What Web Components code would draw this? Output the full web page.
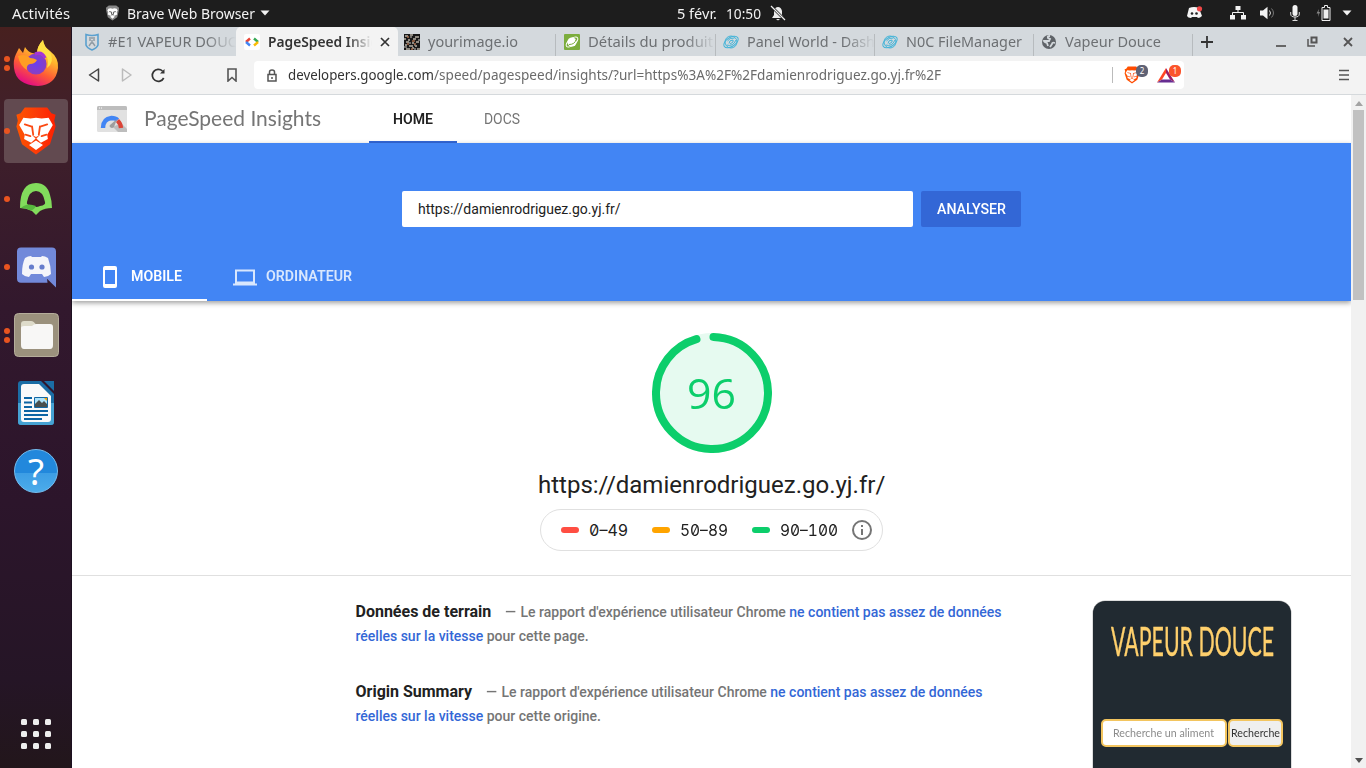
<!DOCTYPE html>
<html lang="fr">
<head>
<meta charset="utf-8">
<title>PageSpeed Insights</title>
<style>html,body{margin:0;height:100%;overflow:hidden;background:#fff;font-family:Roboto,sans-serif}</style>
</head>
<body>
<desktop-shell></desktop-shell>
<script>
const define = (name, css, html) => customElements.define(name, class extends HTMLElement {
  constructor() {
    super();
    this.attachShadow({ mode: 'open' }).innerHTML = `<style>:host{display:block;box-sizing:border-box}*{box-sizing:border-box}svg{display:block;flex:none}${css}</style>${html}`;
  }
});
const planet = c => `<svg slot="icon" width="16" height="16" viewBox="0 0 16 16" fill="none" stroke="${c}" stroke-width="1"><ellipse cx="8" cy="8" rx="8" ry="4.500" transform="rotate(-33 8 8)"/><circle cx="8" cy="8" r="6"/><path d="M3.500 11Q10 13 13 6M4.500 7q2-3.500 7-3M6 9.500q0-3.500 4-3.500v2L7 10"/></svg>`;
const brave = `<path d="M8 1h16l3 4 3 1-1 4 1 4-4 12-10 7L6 26 2 14l1-4-1-4 3-1z" fill="url(#bg)"/><path d="M7 8l5 .5 4-.5 4 .5 5-.5 3 5-4 6.500.5 3-5 2.500-3.500-3-3.500 3-5-2.500.5-3L4 13zM11 26.500l5-3 5 3-5 3.500z" fill="#fff"/><path d="M8 12.500l5 1.500M24 12.500L19 14M13.200 14l.8 5.500M18.800 14l-.8 5.500M8.500 19.500l3.500 1M23.500 19.500l-3.500 1" fill="none" stroke="#fb4a13" stroke-width="1.300" stroke-linecap="round"/><path d="M13 19.500l3 1.500 3-1.500-3 3z" fill="#fb4a13"/>`;

define('desktop-shell', `
:host{display:grid;grid-template:27px 1fr/72px 1fr;width:1366px;height:768px;overflow:hidden}
top-bar{grid-column:1/3}
`, `<top-bar></top-bar><app-dock></app-dock><browser-window></browser-window>`);

define('top-bar', `
:host{background:#1d1d1d;color:#f2f2f2;font:15px/27px "Noto Sans",sans-serif;display:grid;grid-template-columns:677px 1fr auto}
div{display:flex;align-items:center;height:26px}
.l{padding-left:12px}.l svg.b{margin:0 7px 0 35px}.l svg.a{margin-left:5px}
.c ui-text+ui-text{margin-left:9px}.c svg{margin-left:9px}
.r{padding-right:14px}
`, `<div class="l"><ui-text w="58">Activités</ui-text><svg class="b" width="15" height="16" viewBox="0 0 32 34"><path d="M8 1h16l6 5-1 8-3 12-10 7L6 26 3 14 2 6z" fill="#888"/><path d="M7 8l5-1 4 1 4-1 5 1 2 4-2 3 1 5-6 3-4-2-4 2-6-3 1-5-2-3zM11 25l5-3 5 3-5 4z" fill="#fff"/><path d="M9 14l5 1v5h4v-5l5-1" fill="none" stroke="#555" stroke-width="2"/></svg><ui-text w="128">Brave Web Browser</ui-text><svg class="a" width="10" height="6"><path d="M.5.500h9L5 5.500z" fill="#f2f2f2"/></svg></div>
<div class="c"><ui-text w="40">5 févr.</ui-text><ui-text w="35">10:50</ui-text><svg width="16" height="16" viewBox="0 0 16 16"><path d="M2 13h12l-2-3V6Q11 2 8 2T4 6v4zM6 14h4l-2 1.500z" fill="#eee"/><path d="M1 1l14 14" stroke="#1d1d1d" stroke-width="2.500"/><path d="M1 1l14 14" stroke="#eee" stroke-width="1.200"/></svg></div>
<div class="r"><svg width="17" height="14" viewBox="0 0 17 14" style="margin-right:27px"><path d="M3 2Q8 0 13 2l3 8q-2 2-4 2l-1-1H6l-1 1Q2 12 1 10z" fill="#f4f4f4"/><circle cx="6" cy="7.500" r="1.300" fill="#222"/><circle cx="10.500" cy="7.500" r="1.300" fill="#222"/><circle cx="13.500" cy="2.800" r="2.600" fill="#f04747"/></svg>
<svg width="16" height="14" viewBox="0 0 16 14" style="margin-right:14px"><path d="M5.500 0h5v4h-5zM0 9h5v4.500H0zM11 9h5v4.500h-5z" fill="#f2f2f2"/><path d="M8 4v3M2.500 9V6.500h11V9" fill="none" stroke="#f2f2f2"/></svg>
<svg width="15" height="14" viewBox="0 0 15 14" style="margin-right:15px"><path d="M0 4.500h3L7.500.8v12.400L3 9.500H0z" fill="#f2f2f2"/><path d="M9.500 4.500q2 2.500 0 5" stroke="#ddd" fill="none"/><path d="M11.500 2.500q4 4.500 0 9" stroke="#777" fill="none"/></svg>
<svg width="10" height="16" viewBox="0 0 10 16" style="margin-right:16px"><rect x="2.500" width="5" height="11" rx="2.500" fill="#f2f2f2"/><path d="M.7 7v2q0 3 4.300 3t4.300-3V7M5 12v3.500M2.500 15.500h5" fill="none" stroke="#ddd"/></svg>
<svg width="15" height="16" viewBox="0 0 15 16" style="margin-right:11px"><path d="M3 4L.5 8.500h2L2 12l2-5H2.500z" fill="#888"/><path d="M6 2.500h2.500v-2h3v2H14v13H6z" stroke="#eee" fill="none"/><path d="M7.500 4.500h5v9h-5z" fill="#eee"/></svg>
<svg width="10" height="6"><path d="M.5.500h9L5 5.500z" fill="#f2f2f2"/></svg></div>`);

define('dock-item', `
:host{position:relative;height:68px;display:grid;place-items:center}
:host([active]) .tile{background:#624a50}
.tile{width:64px;height:64px;border-radius:4px;display:grid;place-items:center}
.dots{position:absolute;left:4px;top:0;height:100%;display:flex;flex-direction:column;justify-content:center;gap:3px}
.dots i{width:6px;height:6px;border-radius:50%;background:#e95420;display:none}
:host([dots]) i:first-child,:host([dots="2"]) i{display:block}
`, `<div class="tile"><slot></slot></div><div class="dots"><i></i><i></i></div>`);

define('app-dock', `
:host{background:linear-gradient(#47201f 0,#41202a 12%,#32182d 38%,#2c152b 64%,#251526 88%,#22161b 100%);display:flex;flex-direction:column;padding-top:2px;border-right:1px solid #1c1020}
dock-item{margin-right:-1px}
.grid{margin:auto 0 19px 21px;display:grid;grid-template-columns:repeat(3,6px);gap:6px;width:30px}
.grid i{width:6px;height:6px;background:#eee;border-radius:1.500px}
.help{width:44px;height:44px;border-radius:50%;background:linear-gradient(#2288dc 0 54%,#3c9de5 54%,#4cacea);border:1px solid #74bdf0;color:#fff;font:37px/42px "Noto Sans",sans-serif;text-align:center}
`, `
<dock-item dots="2"><svg width="46" height="46" viewBox="0 0 46 46"><defs><linearGradient id="f" x1=".8" y1="0" x2=".3" y2="1"><stop stop-color="#fff44f"/><stop offset=".35" stop-color="#ffb52c"/><stop offset=".65" stop-color="#ff5b35"/><stop offset="1" stop-color="#e1058a"/></linearGradient><radialGradient id="p"><stop stop-color="#6a3ff0"/><stop offset="1" stop-color="#8a3fc0"/></radialGradient></defs><path d="M3 14l3-6 4 5 2-6q3 5 7 6l5 1q0-8 6-14 0 6 7 11 9 7 8 17-2 17-20 18Q3 45 1 28 0 20 3 14z" fill="url(#f)"/><circle cx="23" cy="24" r="10.500" fill="url(#p)"/><path d="M5 16q8-3 12 2 4 0 7 2-2 4-7 4-4 1-3 6-7-4-9-14z" fill="#ff9d24"/><path d="M24 14Q38 12 34 28q8-6 3-16-6-5-7-12-6 6-6 14z" fill="#ffe044"/><path d="M22 14q7-3 10 4" stroke="#a535d8" stroke-width="3" fill="none"/></svg></dock-item>
<dock-item dots="1" active><svg width="42" height="50" viewBox="1 0 30 34" preserveAspectRatio="none"><defs><linearGradient id="bg"><stop stop-color="#ff5500"/><stop offset=".55" stop-color="#fb3a08"/><stop offset="1" stop-color="#ff2000"/></linearGradient></defs>${brave}</svg></dock-item>
<dock-item dots="1"><svg width="34" height="34" viewBox="0 0 34 34"><path fill-rule="evenodd" d="M17 1Q28 1 31 13q2 6 2 13-7 0-12 3l-4 4-4-4Q7 26 1 26 1 1 17 1zM17 9q-7 0-9 11-1 3 5 4 4 2 8 0 6-1 5-4Q24 9 17 9z" fill="#82dc5c"/><path d="M2 26q6-6 15-2-2 5-7 4-2-2-8-2z" fill="#58b83e"/></svg></dock-item>
<dock-item dots="1"><svg width="39" height="41" viewBox="0 0 39 41"><path d="M4 .5h31q4 0 4 4V41l-9-9 .5 4H4q-4 0-4-4V4.500q0-4 4-4z" fill="#7289da" transform="scale(1 .99)"/><path d="M8 11q3-2 6-2l1 1h9l1-1q3 0 6 2 3 8 3 16-3 3-7 3l-2-3H14l-2 3q-4 0-7-3 0-10 3-16z" fill="#f5f5fa"/><circle cx="14.500" cy="20" r="2.600" fill="#667ccc"/><circle cx="25" cy="20" r="2.600" fill="#667ccc"/></svg></dock-item>
<dock-item dots="2"><svg width="45" height="44" viewBox="0 0 45 44"><rect x=".5" y=".5" width="44" height="43" rx="4" fill="#9b917d" stroke="#b5ad9b"/><path d="M7 11q0-3 3-3h7q3 0 5 4v8H7z" fill="#dedbca"/><path d="M7 15q0-2 3-2h8q2-2 4-2h14q3 0 3 3v18q0 4-3 4H10q-3 0-3-4z" fill="#f8f7f6"/></svg></dock-item>
<dock-item><svg width="38" height="46" viewBox="0 0 38 46"><path d="M4 1h20l13 13v28q0 3-3 3H4q-3 0-3-3V4q0-3 3-3z" fill="#1b6da5"/><path d="M1 23h36v19q0 3-3 3H4q-3 0-3-3z" fill="#46a2d3"/><path d="M7 4h15l12 12v23q0 3-3 3H7q-3 0-3-3V7q0-3 3-3z" fill="#fafafa"/><path d="M27 1h10v10z" fill="#1b6da5"/><path d="M7 18h8M7 22.500h8M7 27h8M7 31h24M7 35h24M7 39h18" stroke="#0d65a4" stroke-width="2"/><path d="M17.500 17.500h13v10h-13z" fill="#aee3fa" stroke="#1468a4"/><path d="M18 27v-3l4-4 3 3 2-2 3 3v3z" fill="#49504f"/><path d="M27 18h3v3z" fill="#fba400"/></svg></dock-item>
<dock-item><div class="help">?</div></dock-item>
<div class="grid">${'<i></i>'.repeat(9)}</div>`);

define('browser-window', `
:host{display:grid;grid-template-rows:29px 39px 1fr;min-height:0;overflow:hidden}
main{display:grid;grid-template-columns:1279px 15px;min-height:0}
`, `<tab-strip></tab-strip><tool-bar></tool-bar><main><page-view></page-view><scroll-rail></scroll-rail></main>`);

define('browser-tab', `
:host{display:flex;align-items:center;gap:8px;width:159px;height:29px;padding-left:7px;color:#6d7073;font:15px/29px "Noto Sans",sans-serif;overflow:hidden;background:linear-gradient(#b7bbbe,#b7bbbe) right 0 top 7px/1px 22px no-repeat}
.t{flex:1;overflow:hidden}
:host([fade]) .t{-webkit-mask:linear-gradient(90deg,#000 76%,transparent 100%)}
:host([active]){width:162px;padding-left:8px;background:#f3f3f3;border-radius:5px 5px 0 0;color:#333;font-weight:600;padding-right:8px}
:host([plain]){background:none;padding-left:8px}
`, `<slot name="icon"></slot><div class="t"><slot></slot></div><slot name="close"></slot>`);

define('tab-strip', `
:host{display:flex;align-items:center;background:#d4d9dd;padding-left:4px}
.wc{margin-left:auto;display:flex;align-items:center;gap:20px;padding-right:12px}
`, `
<browser-tab fade plain style="width:160px"><svg slot="icon" width="16" height="18" viewBox="0 0 16 18" fill="none" stroke="#5aa0cf"><path d="M2 1.500Q8 3.500 14 1.500V12q-1 3-6 5-5-2-6-5z" stroke-width="1.600"/><path d="M5 5h6M5 7h2M9 7h2M8 7v3M5 13l2-3h2l2 3" stroke="#8e9aa3" stroke-width="1.400"/></svg><ui-text w="129">#E1 VAPEUR DOUC</ui-text></browser-tab>
<browser-tab active fade><svg slot="icon" width="16" height="16" viewBox="0 0 16 16"><rect width="16" height="16" rx="2" fill="#fff"/><g fill="none" stroke-width="2.400"><path d="M6 4.500L2 8" stroke="#ea4335"/><path d="M2 8l4 3.500" stroke="#4285f4"/><path d="M10 4.500L14 8" stroke="#34a853"/><path d="M14 8l-4 3.500" stroke="#fbbc04"/></g></svg><ui-text w="111">PageSpeed Insig</ui-text><svg slot="close" width="10" height="10" stroke="#333" stroke-width="1.700"><path d="M1 1l8 8M9 1L1 9"/></svg></browser-tab>
<browser-tab style="padding-left:6px;width:158px"><svg slot="icon" width="16" height="16" viewBox="0 0 16 16"><path fill="#181818" d="M0 0h16v16H0z"/><path d="M1 2h3M6 1h3M11 3h4M0 5h2M4 6h2M9 5h3M2 8h3M8 9h2M12 8h3M1 11h2M5 12h4M11 12h2M2 15h4M8 14h2M13 15h3" stroke="#b7b0a4" stroke-width="1.500"/><path d="M6 3h2M14 6h2M5 9h2M10 11h1M0 13h3M10 15h2" stroke="#8f8c88" stroke-width="1.500"/><path d="M3 3h2M8 7h3M3 10h2M10 10h2M7 15h2" stroke="#a56b4b" stroke-width="1.500"/></svg><ui-text w="90">yourimage.io</ui-text></browser-tab>
<browser-tab fade style="padding-left:8px;width:160px"><svg slot="icon" width="16" height="16" viewBox="0 0 16 16"><rect width="16" height="16" rx="1" fill="#7cad3d"/><circle cx="8" cy="8" r="4.600" fill="#fff"/><ellipse cx="8" cy="8" rx="7" ry="3.300" transform="rotate(-38 8 8)" fill="none" stroke="#fff"/><path d="M5 10.500q6 0 7-5" stroke="#7cad3d" fill="none"/></svg><ui-text w="125">Détails du produit</ui-text></browser-tab>
<browser-tab fade>${planet('#45b4d8')}<ui-text w="128">Panel World - Dash</ui-text></browser-tab>
<browser-tab>${planet('#45b4d8')}<ui-text w="116">N0C FileManager</ui-text></browser-tab>
<browser-tab><svg slot="icon" width="16" height="16" viewBox="0 0 16 16"><circle cx="8" cy="8" r="7" fill="#5f6368"/><path d="M9 2q-3 0-2 2l2 1-1 2H3q0 1 3 2l1 3M14 9q-3-1-3 1l-2 3" stroke="#d4d9dd" stroke-width="1.800" fill="none"/></svg><ui-text w="96">Vapeur Douce</ui-text></browser-tab>
<svg width="12" height="12" style="margin-left:8px" stroke="#333" stroke-width="1.800"><path d="M6 0v12M0 6h12"/></svg>
<div class="wc"><svg width="11" height="12"><path d="M0 10h10" stroke="#666" stroke-width="2"/></svg><svg width="12" height="12" fill="none" stroke="#555"><path d="M4.500 1.500h5v5h-5z" stroke-width="2"/><path d="M1 3v7h7" stroke-width="1.500"/></svg><svg width="10" height="10" style="margin:0 1px 0 4px" stroke="#555" stroke-width="1.800"><path d="M1 1l8 8M9 1L1 9"/></svg></div>`);

define('tool-bar', `
:host{display:flex;align-items:center;background:#f3f3f3;border-bottom:1px solid #d5d9dc;padding:0 17px 0 16px}
.addr{width:930px;height:28px;background:#fff;border-radius:4px;margin-left:15px;display:flex;align-items:center;padding:0 2px 0 12px;font:15px/26px "Noto Sans",sans-serif;color:#6b6b6b}
.addr ui-text{margin-bottom:2px}
.addr .host{color:#333;margin-left:10px}
.sep{width:1px;height:16px;background:#bbb;margin-left:auto;margin-right:11px}
.ic{position:relative;width:33px;height:18px}
.ic b{position:absolute;left:12px;top:-1px;width:12px;height:12px;border-radius:5px;background:#5f6275;color:#fff;font:8px/12px "Noto Sans",sans-serif;text-align:center}
.ic.n{width:25px}.ic.n b{background:#fb542b}
`, `
<svg width="12" height="14" fill="none" stroke="#444" stroke-width="1.500"><path d="M10.500 1v12L1.500 7z" stroke-linejoin="round"/></svg>
<svg width="12" height="14" fill="none" stroke="#bbb" stroke-width="1.500" style="margin-left:21px"><path d="M1.500 1v12l8.500-6z" stroke-linejoin="round"/></svg>
<svg width="15" height="15" fill="none" stroke="#333" stroke-width="1.700" style="margin-left:18px"><path d="M12.700 10A6 6 0 1 1 11.500 3"/><path d="M13.500 1v4.500H9z" fill="#333" stroke="none"/></svg>
<svg width="10" height="14" fill="none" stroke="#555" stroke-width="1.600" style="margin-left:61px;margin-right:2px"><path d="M1 1h8v12L5 9.500 1 13z"/></svg>
<div class="addr"><svg width="12" height="13" fill="none" stroke="#555" stroke-width="1.500"><path d="M2 5.500h8v6.500H2zM3.500 5V3q0-2 2.500-2t2.500 2v2M6 8v2"/></svg><ui-text class="host" w="146">developers.google.com</ui-text><ui-text w="507">/speed/pagespeed/insights/?url=https%3A%2F%2Fdamienrodriguez.go.yj.fr%2F</ui-text>
<span class="sep"></span><span class="ic"><svg width="16" height="18" viewBox="1 0 30 34"><defs><linearGradient id="bg"><stop stop-color="#f50"/><stop offset="1" stop-color="#ff4200"/></linearGradient></defs>${brave}</svg><b>2</b></span><span class="ic n"><svg width="18" height="18" viewBox="0 0 18 18"><path d="M9 2L0 16.500l5-3L9 7z" fill="#ff4724"/><path d="M9 2l9 14.500-5-3L9 7z" fill="#9e1f63"/><path d="M0 16.500h18l-5-3H5z" fill="#662d91"/></svg><b>1</b></span></div>
<svg width="10" height="12" stroke="#555" stroke-width="1.700" style="margin-left:auto"><path d="M0 1.500h10M0 6h10M0 10.500h10"/></svg>`);

define('scroll-rail', `
:host{background:#f1f1f1;display:flex;flex-direction:column;align-items:center;padding:6px 0 5px}
i{width:11px;height:190px;background:#c1c1c1;margin:4px 0 auto}
`, `<svg width="8" height="5"><path d="M0 5h8L4 0z" fill="#a3a3a3"/></svg><i></i><svg width="8" height="5"><path d="M0 0h8L4 5z" fill="#505050"/></svg>`);

define('page-view', `:host{background:#fff;min-width:0;min-height:0;overflow:hidden}`,
 `<site-header></site-header><search-hero></search-hero><score-panel></score-panel><field-data></field-data>`);

define('site-header', `
:host{display:flex;align-items:center;height:48px;padding-left:25px;font:500 14px/48px Roboto,sans-serif;color:#757575}
.name{font:400 20.500px/44px Lato,sans-serif;margin:0 48px 2px 17px}
.tab{height:48px;padding:0 24px;width:88px}
.tab.on{color:#212121;font-weight:600;border-bottom:2px solid #3367d6}
.tab.docs{padding-left:27px;font-weight:400}
`, `<svg width="30" height="26" viewBox="0 0 30 26"><rect width="30" height="26" rx="1.500" fill="#e1e1e1"/><path d="M0 4V1.500Q0 0 1.500 0h27Q30 0 30 1.500V4z" fill="#bdbdbd"/><path d="M2 2h1M4 2h1" stroke="#fff"/><path d="M16 21l8-4 6 6v3h-9z" fill="#bdbdbd"/><path d="M6 22q0-9 8.500-10 4 0 6 2" fill="none" stroke="#4285f4" stroke-width="4.400"/><path d="M20.500 14.500q3.200 3 3.500 7.500" fill="none" stroke="#db4437" stroke-width="4.400"/><path d="M13 19l7-6-3 8q-2 2-4 0-1-1 0-2z" fill="#9e9e9e"/></svg>
<ui-text class="name" w="177">PageSpeed Insights</ui-text><div class="tab on"><ui-text w="40">HOME</ui-text></div><div class="tab docs"><ui-text w="36">DOCS</ui-text></div>`);

define('search-hero', `
:host{height:158px;background:#4285f4;box-shadow:0 2px 5px rgba(0,0,0,.38);position:relative;display:flex;flex-direction:column;justify-content:space-between;padding-top:48px;font:500 14px/36px Roboto,sans-serif;color:#fff}
form{display:flex;gap:8px;padding-left:330px}
.in{width:511px;height:36px;background:#fff;border-radius:2px;color:#212121;font-weight:400;padding-left:16px}
.btn{width:100px;height:36px;background:#3367d6;border-radius:2px;padding-left:16px}
nav{display:flex;height:50px;font-weight:600}
nav div{display:flex;align-items:center;height:50px}
.m{width:135px;border-bottom:2px solid #fff;padding-left:31px}
.m ui-text{margin-left:14px}.d{padding:0 0 2px 26px;color:#d9e7fd}.d ui-text{margin-left:9px}
nav ui-text{line-height:48px;margin-top:2px}
`, `<form><div class="in"><ui-text w="202">https://damienrodriguez.go.yj.fr/</ui-text></div><div class="btn"><ui-text w="69">ANALYSER</ui-text></div></form>
<nav><div class="m"><svg width="14" height="22" style="margin-top:3px"><path fill-rule="evenodd" d="M2 0h10q2 0 2 2v18q0 2-2 2H2q-2 0-2-2V2Q0 0 2 0zM2 4v14h10V4z" fill="#fff"/></svg><ui-text w="51">MOBILE</ui-text></div>
<div class="d"><svg width="24" height="17" style="margin-top:4px"><path d="M3 1.500h18v12H3zM0 15.500h24" fill="none" stroke="#d9e7fd" stroke-width="2"/></svg><ui-text w="86">ORDINATEUR</ui-text></div></nav>`);

define('score-gauge', `
:host{width:120px;height:120px;display:grid}
svg,div{grid-area:1/1}
div{font:400 41.500px/121px "Open Sans",sans-serif;color:#0cce6b;text-align:center;padding-right:2px}
`, `<svg width="120" height="120"><circle cx="60" cy="60" r="60" fill="#e6faf0"/><circle cx="60" cy="60" r="56" fill="none" stroke="#0cce6b" stroke-width="8" stroke-linecap="round" stroke-dasharray="334 352" transform="rotate(-88.500 60 60)"/></svg><div><ui-text w="49">96</ui-text></div>`);

define('score-panel', `
:host{height:275px;border-bottom:1px solid #e0e0e0;display:flex;flex-direction:column;align-items:center;padding-top:32px;color:#212121}
h1{font:400 24px/32px Roboto,sans-serif;margin:16px 0 8px}
.legend{display:flex;align-items:center;width:343px;height:42px;border:1px solid #e0e0e0;border-radius:21px;padding-left:20px;font:400 16px/40px Inter,sans-serif;font-feature-settings:"zero","tnum"}
i{width:18px;height:6px;border-radius:3px;margin-right:10px}
.legend ui-text{margin-right:24px}.legend ui-text.z{margin-right:14px}
`, `<score-gauge></score-gauge><h1><ui-text w="347">https://damienrodriguez.go.yj.fr/</ui-text></h1>
<div class="legend"><i style="background:#ff4e42"></i><ui-text w="39">0–49</ui-text><i style="background:#ffa400"></i><ui-text w="48">50–89</ui-text><i style="background:#0cce6b"></i><ui-text class="z" w="58">90–100</ui-text><svg width="20" height="20" fill="none" stroke="#757575" stroke-width="2"><circle cx="10" cy="10" r="9"/><path d="M10 9v6M10 5v2"/></svg></div>`);

define('field-note', `
:host{font:500 14px/24px Roboto,sans-serif;color:#757575;width:660px}
.row{display:flex;height:24px}
`, `<div class="row"><slot name="title"></slot><slot name="lead"></slot></div><div class="row"><slot name="rest"></slot></div>`);

define('field-data', `
:host{display:flex;justify-content:space-between;padding:24px 60px 0 283.500px}
.notes{display:flex;flex-direction:column;gap:32px}
.h{font-size:16px;font-weight:700;color:#212121;margin-right:13px}
.dash{margin-right:5px}
b{font-weight:500;color:#3367d6}
phone-preview{margin-top:1px}
`, `<div class="notes">
<field-note><ui-text slot="title" class="h" w="136">Données de terrain</ui-text><ui-text slot="lead" class="dash" w="11">—</ui-text><ui-text slot="lead" w="481">Le rapport d'expérience utilisateur Chrome <b>ne contient pas assez de données</b></ui-text><ui-text slot="rest" w="233"><b>réelles sur la vitesse</b> pour cette page.</ui-text></field-note>
<field-note><ui-text slot="title" class="h" w="117">Origin Summary</ui-text><ui-text slot="lead" class="dash" w="11">—</ui-text><ui-text slot="lead" w="481">Le rapport d'expérience utilisateur Chrome <b>ne contient pas assez de données</b></ui-text><ui-text slot="rest" w="246"><b>réelles sur la vitesse</b> pour cette origine.</ui-text></field-note>
</div><phone-preview></phone-preview>`);

define('phone-preview', `
:host{width:198px;height:352px;background:#212a31;border-radius:12px;box-shadow:0 0 0 .5px #bbb;padding:17px 8px;font-family:Lato,sans-serif}
.t{font:400 40px/46px Lato,sans-serif;color:#ffd06c;padding-left:10px;height:101px;-webkit-text-stroke:.4px #ffd06c}
.s{display:flex;gap:1px}
.s div{height:28px;border:2px solid #f3c55f;border-radius:5px;background:#fff;width:126px;padding-left:10px;font:11.500px/24px Lato,sans-serif;color:#8b8b8b}
.s .b{width:55px;background:#efefef;padding-left:1px;color:#333}
`, `<div class="t"><ui-text w="163">VAPEUR DOUCE</ui-text></div><div class="s"><div><ui-text w="101">Recherche un aliment</ui-text></div><div class="b"><ui-text w="49">Recherche</ui-text></div></div>`);

/* Single-line label whose glyph run is scaled horizontally to the width given in "w". Registered last so every ancestor is already styled. */
customElements.define('ui-text', class extends HTMLElement {
  connectedCallback() {
    if (this.shadowRoot) return;
    this.attachShadow({ mode: 'open' }).innerHTML = `<style>:host{display:inline-block;white-space:nowrap;flex:none;vertical-align:top}span{display:inline-block;transform-origin:0 50%}</style><span><slot></slot></span>`;
    const s = this.shadowRoot.querySelector('span'), w = +this.getAttribute('w');
    const n = s.getBoundingClientRect().width;
    if (n && Math.abs(w / n - 1) > .006) s.style.transform = `scaleX(${w / n})`;
    this.style.width = w + 'px';
  }
});
</script>
</body>
</html>
